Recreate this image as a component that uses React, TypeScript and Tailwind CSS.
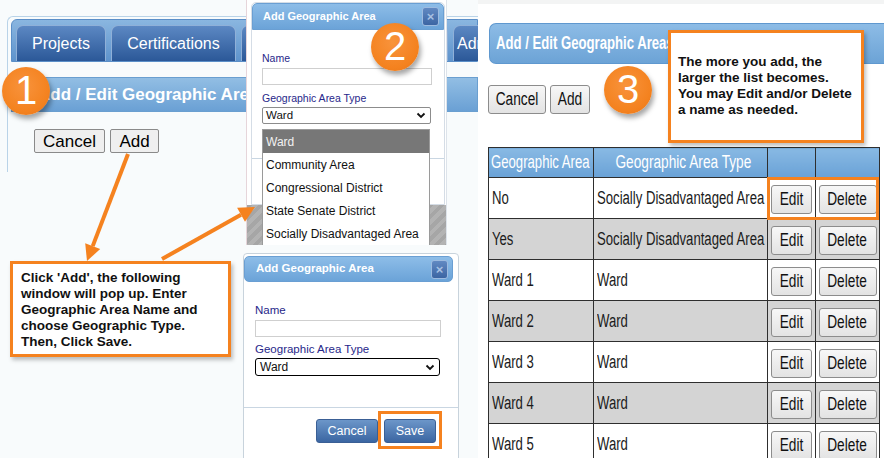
import type { ReactNode } from 'react'

// squeezed text, the right-hand screenshot was scaled down horizontally
function Sq({ children }: { children: ReactNode }) {
  return <span className="inline-block origin-left scale-x-[0.73] whitespace-nowrap">{children}</span>
}

function SqC({ children }: { children: ReactNode }) {
  return <span className="inline-block origin-center scale-x-[0.76] whitespace-nowrap">{children}</span>
}

function Step({ n, className }: { n: string; className: string }) {
  return (
    <div
      className={`absolute flex size-[48px] items-center justify-center rounded-full bg-[radial-gradient(circle_at_45%_40%,#f8933c_0%,#f4821f_65%,#e57419_100%)] pb-[2px] text-[40px] leading-none text-white shadow-[2px_4px_5px_rgba(0,0,0,0.35)] ${className}`}
    >
      {n}
    </div>
  )
}

function CloseBtn() {
  return (
    <span className="flex h-[19px] w-[17px] items-center justify-center rounded-[3px] border border-[#9dbbe0] bg-[linear-gradient(#6189c2,#3c65a3)] text-[13px] font-bold leading-none text-[#a7c0e2]">
      ×
    </span>
  )
}

function Chevron() {
  return (
    <svg width="10" height="7" viewBox="0 0 10 7" className="shrink-0">
      <path d="M1.5 1.5 L5 5 L8.5 1.5" fill="none" stroke="#111" strokeWidth="1.8" />
    </svg>
  )
}

const rows = [
  ['No', 'Socially Disadvantaged Area'],
  ['Yes', 'Socially Disadvantaged Area'],
  ['Ward 1', 'Ward'],
  ['Ward 2', 'Ward'],
  ['Ward 3', 'Ward'],
  ['Ward 4', 'Ward'],
  ['Ward 5', 'Ward'],
]

const areaTypes = [
  'Ward',
  'Community Area',
  'Congressional District',
  'State Senate District',
  'Socially Disadvantaged Area',
]

export default function App() {
  return (
    <div className="relative h-[458px] w-[884px] overflow-hidden bg-[#f8fbfc] font-['Liberation_Sans',Arial,sans-serif]">
      {/* step 1 screenshot */}
      <div className="absolute left-0 top-0 h-[458px] w-[478px] overflow-hidden bg-[#f8fbfc]">
        <div className="ml-[7px] mt-[16px] h-[156px] rounded-tl-[6px] border-l border-t border-[#b9d3e8] pl-[3px] pt-[2px]">
          <div className="flex h-[43px] gap-[5px] rounded-tl-[6px] border border-[#5b8fc8] bg-[linear-gradient(#8ab6e0,#5e93cc)] pl-[4px] pt-[5px]">
            <div className="flex h-[36px] w-[90px] shrink-0 items-center justify-center rounded-t-[7px] border border-b-0 border-[#8fb0d8] bg-[linear-gradient(#5c88c3,#2b5898)] text-[16px] text-white">
              Projects
            </div>
            <div className="flex h-[36px] w-[125px] shrink-0 items-center justify-center rounded-t-[7px] border border-b-0 border-[#8fb0d8] bg-[linear-gradient(#5c88c3,#2b5898)] text-[16px] text-white">
              Certifications
            </div>
            <div className="flex h-[36px] w-[207px] shrink-0 items-center justify-center rounded-t-[7px] border border-b-0 border-[#8fb0d8] bg-[linear-gradient(#5c88c3,#2b5898)] text-[16px] text-white">
              Reports
            </div>
            <div className="flex h-[36px] w-[80px] shrink-0 items-center rounded-t-[7px] border border-b-0 border-[#8fb0d8] bg-[linear-gradient(#5c88c3,#2b5898)] pl-[3px] text-[16px] text-white">
              Administration
            </div>
          </div>
          <div className="mt-[15px] flex h-[35px] items-center whitespace-nowrap border border-[#6a9fd0] bg-[linear-gradient(#92bee4,#6aa0d4)] pl-[26px] text-[17px] font-bold text-white">
            Add / Edit Geographic Area
          </div>
          <div className="ml-[23px] mt-[17px] flex gap-[5px]">
            <button className="h-[24px] w-[71px] rounded-[2px] border border-[#8a8a8a] bg-[#efefef] text-[17px] leading-none text-black">
              Cancel
            </button>
            <button className="h-[24px] w-[49px] rounded-[2px] border border-[#8a8a8a] bg-[#efefef] text-[17px] leading-none text-black">
              Add
            </button>
          </div>
        </div>
      </div>

      {/* step 2 screenshot, dropdown open */}
      <div className="absolute left-[246px] top-0 flex h-[245px] w-[201px] flex-col overflow-hidden border-l border-r border-l-[#e6d5da] border-r-[#dde3ea] bg-white">
        <div className="h-[205px] shrink-0 bg-white pl-[4px] pt-[2px]">
          <div className="h-[203px] w-[194px] rounded-t-[5px] border border-[#d5dde6] bg-white">
            <div className="flex h-[27px] items-center justify-between rounded-t-[5px] border border-[#6a9fd3] bg-[linear-gradient(#8dbde8,#6ba3d8)] pl-[10px] pr-[4px] text-[11px] font-bold text-white">
              Add Geographic Area
              <CloseBtn />
            </div>
            <div className="pl-[10px]">
              <div className="mt-[22px] text-[10.5px] leading-[13px] text-[#27278a]">Name</div>
              <div className="mt-[3px] h-[17px] w-[170px] border border-[#cfcfcf] bg-white" />
              <div className="mt-[7px] text-[10.5px] leading-[13px] text-[#27278a]">Geographic Area Type</div>
              <div className="relative mt-[2px] w-[169px]">
                <div className="flex h-[17px] items-center justify-between rounded-[2px] border border-[#8c8c8c] bg-white pl-[3px] pr-[4px] text-[11.5px] text-[#111]">
                  Ward
                  <Chevron />
                </div>
                <div className="absolute left-0 top-[22px] z-10 w-[168px] border border-[#9a9a9a] bg-white">
                  {areaTypes.map((t, i) => (
                    <div
                      key={t}
                      className={
                        i === 0
                          ? 'flex h-[23px] items-center bg-[#777777] pl-[3px] text-[12px] text-[#f2f2f2]'
                          : 'flex h-[23px] items-center pl-[3px] text-[12px] text-[#111]'
                      }
                    >
                      {t}
                    </div>
                  ))}
                </div>
              </div>
            </div>
            <div className="mt-[34px] border-t border-[#c9d6e2]" />
          </div>
        </div>
        <div className="flex-1 bg-[repeating-linear-gradient(135deg,#a6a6a6_0px,#a6a6a6_4px,#b3b3b3_4px,#b3b3b3_8px)]" />
      </div>

      {/* step 2 screenshot, filled dialog */}
      <div className="absolute left-[243px] top-[253px] h-[210px] w-[216px] rounded-[4px] border border-[#c8d3dc] bg-white pt-[2px]">
        <div className="mr-[5px] flex h-[26px] items-center justify-between rounded-[5px] border border-[#6a9fd3] bg-[linear-gradient(#8dbde8,#6ba3d8)] pl-[11px] pr-[4px] text-[11.5px] font-bold text-white">
          Add Geographic Area
          <CloseBtn />
        </div>
        <div className="pl-[11px]">
          <div className="mt-[21px] text-[11.5px] leading-[14px] text-[#27278a]">Name</div>
          <div className="mt-[3px] h-[17px] w-[186px] border border-[#cfcfcf] bg-white" />
          <div className="mt-[5px] text-[11.5px] leading-[14px] text-[#27278a]">Geographic Area Type</div>
          <div className="mt-[2px] flex h-[18px] w-[185px] items-center justify-between rounded-[3px] border border-black bg-white pl-[4px] pr-[4px] text-[12px] text-[#111]">
            Ward
            <Chevron />
          </div>
        </div>
        <div className="mt-[31px] border-t border-[#c9d6e2]" />
        <div className="mt-[11px] flex justify-end gap-[6px] pr-[22px]">
          <button className="h-[24px] w-[62px] rounded-[3px] border border-[#3a5f95] bg-[linear-gradient(#6c96c9,#3b66a2)] text-[12.5px] text-white">
            Cancel
          </button>
          <button className="h-[24px] w-[52px] rounded-[3px] border border-[#3a5f95] bg-[linear-gradient(#6c96c9,#3b66a2)] text-[12.5px] text-white">
            Save
          </button>
        </div>
      </div>

      {/* step 3 screenshot */}
      <div className="absolute left-[478px] top-0 h-[458px] w-[406px] overflow-hidden bg-white">
        <div className="h-[4px] bg-[#f3f4f4]" />
        <div className="ml-[11px] mt-[19px] flex h-[41px] items-center rounded-l-[7px] border border-r-0 border-[#5f98cf] bg-[linear-gradient(#8dbce6,#6ca3d6)] pl-[6px] text-[18px] font-bold text-white">
          <Sq>Add / Edit Geographic Areas</Sq>
        </div>
        <div className="ml-[10px] mt-[21px] flex gap-[4px]">
          <button className="flex h-[29px] w-[58px] items-center justify-center rounded-[3px] border border-[#8c8c8c] bg-[linear-gradient(#f7f7f7,#e3e3e3)] text-[18px] text-[#111]">
            <SqC>Cancel</SqC>
          </button>
          <button className="flex h-[29px] w-[40px] items-center justify-center rounded-[3px] border border-[#8c8c8c] bg-[linear-gradient(#f7f7f7,#e3e3e3)] text-[18px] text-[#111]">
            <SqC>Add</SqC>
          </button>
        </div>
        <table className="ml-[10px] mt-[33px] w-[391px] table-fixed border-collapse text-[18px] text-[#1b1b1b]">
          <colgroup>
            <col className="w-[105px]" />
            <col className="w-[174px]" />
            <col className="w-[48px]" />
            <col className="w-[64px]" />
          </colgroup>
          <thead>
            <tr className="h-[30px]">
              <th className="border border-[#2e2e2e] bg-[linear-gradient(#88b9e4,#6aa2d6)] pl-[2px] text-left font-normal text-white">
                <Sq>Geographic Area</Sq>
              </th>
              <th className="border border-[#2e2e2e] bg-[linear-gradient(#88b9e4,#6aa2d6)] text-center font-normal text-white">
                <SqC>Geographic Area Type</SqC>
              </th>
              <th className="border border-[#2e2e2e] bg-[linear-gradient(#88b9e4,#6aa2d6)]" />
              <th className="border border-[#2e2e2e] bg-[linear-gradient(#88b9e4,#6aa2d6)]" />
            </tr>
          </thead>
          <tbody>
            {rows.map(([area, type], i) => (
              <tr key={area} className={i % 2 === 1 ? 'h-[41px] bg-[#d4d4d4]' : 'h-[41px] bg-white'}>
                <td className="border border-[#2e2e2e] pl-[3px]">
                  <Sq>{area}</Sq>
                </td>
                <td className="border border-[#2e2e2e] pl-[3px]">
                  <Sq>{type}</Sq>
                </td>
                <td className="border border-[#2e2e2e] px-0">
                  <button className="mx-auto mt-[2px] flex h-[29px] w-[41px] items-center justify-center rounded-[3px] border border-[#8c8c8c] bg-[linear-gradient(#f7f7f7,#e3e3e3)] text-[18px] text-[#111]">
                    <SqC>Edit</SqC>
                  </button>
                </td>
                <td className="border border-[#2e2e2e] px-0">
                  <button className="mx-auto mt-[2px] flex h-[29px] w-[58px] items-center justify-center rounded-[3px] border border-[#8c8c8c] bg-[linear-gradient(#f7f7f7,#e3e3e3)] text-[18px] text-[#111]">
                    <SqC>Delete</SqC>
                  </button>
                </td>
              </tr>
            ))}
          </tbody>
        </table>
      </div>

      {/* annotations */}
      <Step n="1" className="left-[2px] top-[67px]" />
      <Step n="2" className="left-[371px] top-[23px]" />
      <Step n="3" className="left-[604px] top-[66px]" />

      <div className="absolute left-[10px] top-[261px] h-[96px] w-[221px] border-[3px] border-[#f5821f] bg-white pl-[8px] pt-[6px] text-[13.5px] font-bold leading-[16px] text-[#111] shadow-[2px_3px_4px_rgba(0,0,0,0.25)]">
        Click 'Add', the following
        <br />
        window will pop up. Enter
        <br />
        Geographic Area Name and
        <br />
        choose Geographic Type.
        <br />
        Then, Click Save.
      </div>

      <div className="absolute left-[668px] top-[30px] h-[113px] w-[196px] border-[3px] border-[#f5821f] bg-white pl-[7px] pt-[21px] text-[13.5px] font-bold leading-[16px] text-[#111] shadow-[2px_3px_4px_rgba(0,0,0,0.25)]">
        The more you add, the
        <br />
        larger the list becomes.
        <br />
        You may Edit and/or Delete
        <br />
        a name as needed.
      </div>

      <div className="absolute left-[378px] top-[411px] h-[38px] w-[64px] border-[3px] border-[#f5821f]" />
      <div className="absolute left-[767px] top-[177px] h-[43px] w-[112px] border-[3px] border-[#f5821f]" />

      <svg className="pointer-events-none absolute left-0 top-0" width="884" height="458">
        <line x1="128" y1="154" x2="92.7" y2="246.1" stroke="#f5821f" strokeWidth="4" />
        <polygon points="87,261 100.2,249 85.2,243.2" fill="#f5821f" />
        <line x1="162" y1="259" x2="241" y2="214.8" stroke="#f5821f" strokeWidth="4" />
        <polygon points="255,207 245,221.8 237.1,207.8" fill="#f5821f" />
      </svg>
    </div>
  )
}
